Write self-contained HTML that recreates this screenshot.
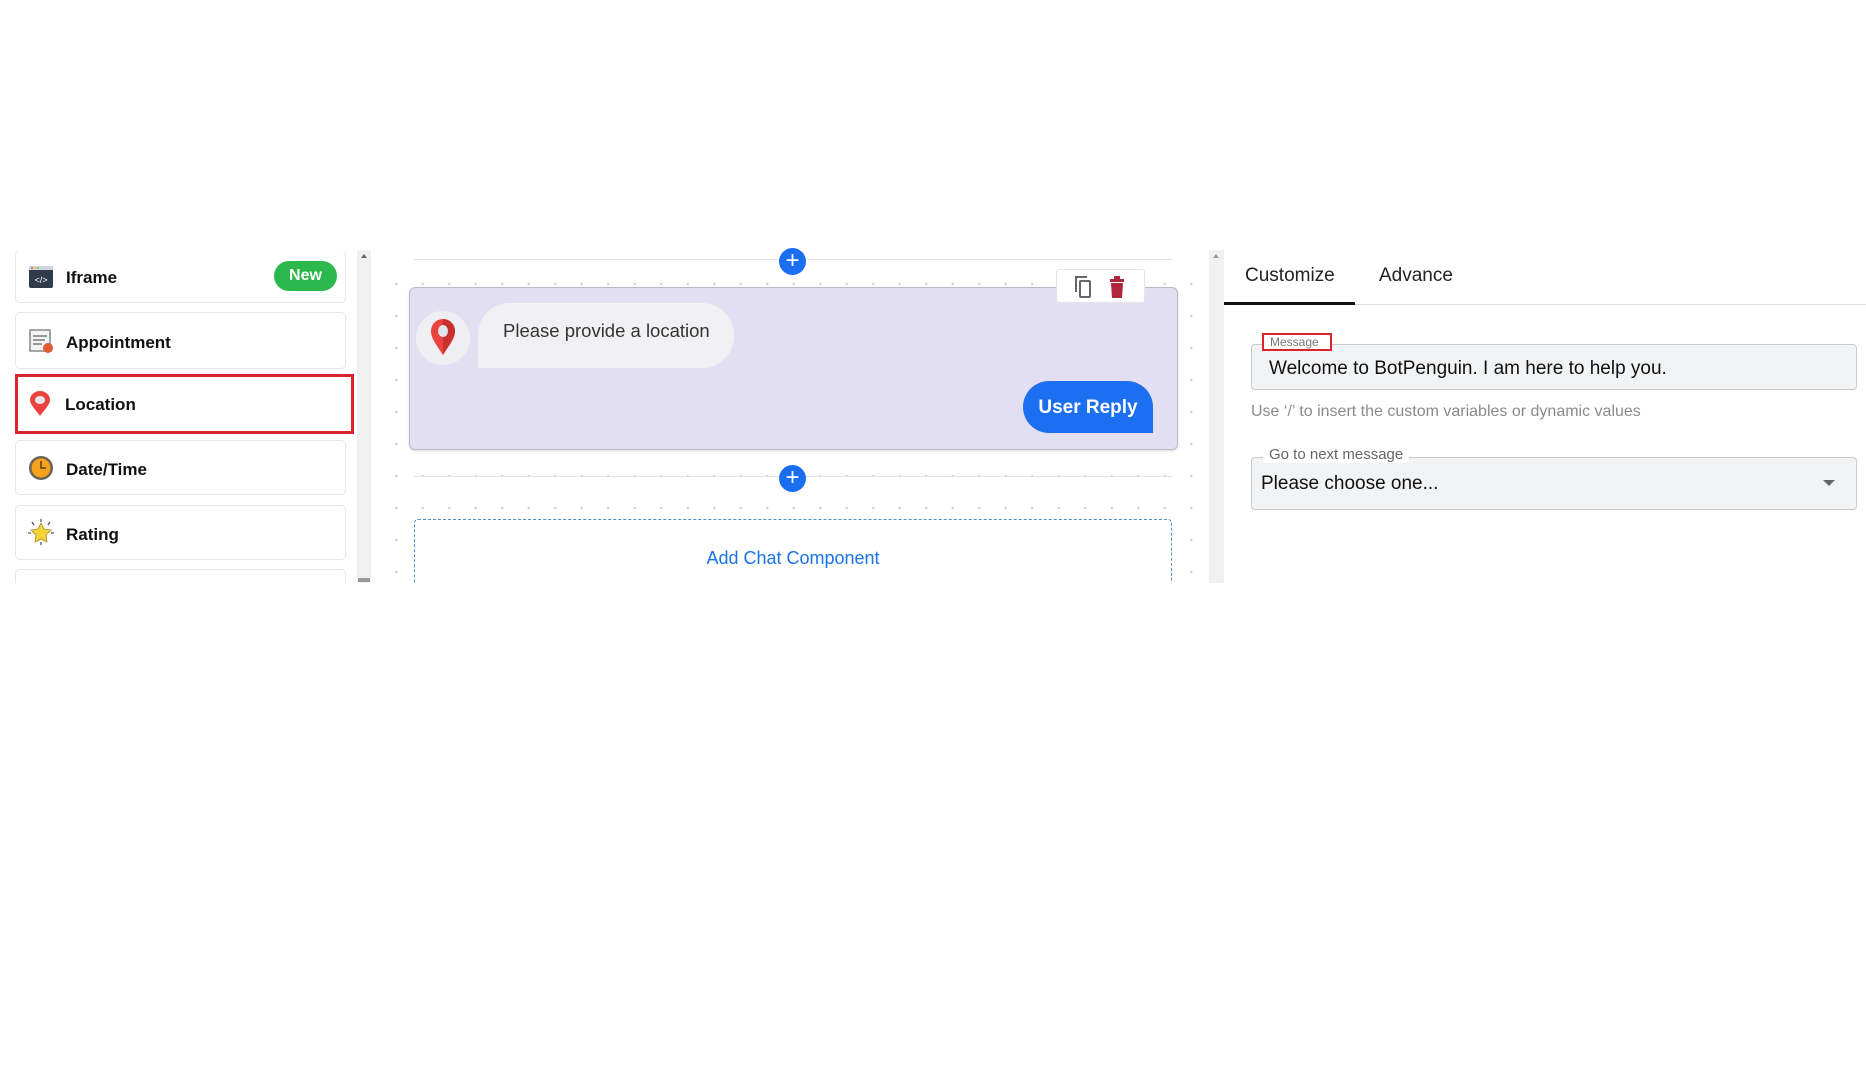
<!DOCTYPE html>
<html><head><meta charset="utf-8"><style>
*{box-sizing:border-box;margin:0;padding:0}
body{width:1866px;height:1080px;background:#fff;position:relative;overflow:hidden;font-family:"Liberation Sans",sans-serif;color:#222}
.a{position:absolute}
.card{position:absolute;left:15px;width:331px;background:#fff;border:1px solid #e6e6e6;border-radius:5px}
.lbl{position:absolute;left:50px;font-size:17px;font-weight:bold;color:#111}
.ic{position:absolute;left:12px;width:26px;height:26px}
.dots{background-image:radial-gradient(circle,#cfcfcf 1px,transparent 1.4px);background-size:26.5px 32px;background-position:3px 0px}
.plus{position:absolute;width:27px;height:27px;border-radius:50%;background:#1a6ef0;color:#fff;font-size:24px;line-height:26px;text-align:center}
</style></head><body>
<div class="card" style="top:250px;height:53px;border-top:none">
 <svg class="ic" style="top:14px" viewBox="0 0 26 26"><rect x="1" y="2" width="24" height="22" rx="2" fill="#2f3a4a"/><rect x="1" y="2" width="24" height="4" fill="#cfd6de"/><circle cx="4" cy="4" r="1" fill="#e55"/><circle cx="7" cy="4" r="1" fill="#fb3"/><circle cx="10" cy="4" r="1" fill="#5c5"/><text x="13" y="19" font-size="9" fill="#fff" text-anchor="middle" font-family="Liberation Sans">&lt;/&gt;</text></svg>
 <div class="lbl" style="top:18px">Iframe</div>
 <div class="a" style="left:258px;top:11px;width:63px;height:30px;border-radius:15px;background:#2db84d;color:#fff;font-weight:bold;font-size:16px;text-align:center;line-height:30px">New</div>
</div>
<div class="card" style="top:312px;height:57px">
 <svg class="ic" style="top:15px" viewBox="0 0 26 26"><rect x="2" y="2" width="20" height="21" fill="#f3f3f3" stroke="#777" stroke-width="1.3"/><path d="M5 8h14M5 12h12M5 16h9" stroke="#777" stroke-width="1.5"/><circle cx="20" cy="20" r="5" fill="#e05a3a"/></svg>
 <div class="lbl" style="top:20px">Appointment</div>
</div>
<div class="card" style="top:374px;height:60px;left:15px;width:339px;border:3px solid #d9242c;border-radius:0">
 <svg class="ic" style="top:14px;left:9px" viewBox="0 0 26 26"><path d="M13 25C7 17 3 13 3 9a10 9 0 0 1 20 0c0 4-4 8-10 16z" fill="#e9423f"/><ellipse cx="13" cy="9" rx="5" ry="4" fill="#e6e6ea"/></svg>
 <div class="lbl" style="top:18px;left:47px">Location</div>
</div>
<div class="card" style="top:440px;height:55px">
 <svg class="ic" style="top:14px" viewBox="0 0 26 26"><circle cx="13" cy="13" r="12" fill="#6b6355"/><circle cx="13" cy="13" r="9.5" fill="#f7a21b"/><path d="M13 6v7h5" stroke="#5a3a10" stroke-width="1.5" fill="none"/></svg>
 <div class="lbl" style="top:19px">Date/Time</div>
</div>
<div class="card" style="top:505px;height:55px">
 <svg class="ic" style="top:13px" viewBox="0 0 26 26"><path d="M13 4l3 6 7 1-5 5 1 7-6-3-6 3 1-7-5-5 7-1z" fill="#f5d33a" stroke="#a98a20" stroke-width=".8"/><path d="M13 0v3M4 3l2 3M22 3l-2 3M0 14h3M23 14h3M13 23v3" stroke="#555" stroke-width="1.3"/></svg>
 <div class="lbl" style="top:19px">Rating</div>
</div>
<div class="card" style="top:569px;height:30px"></div>
<div class="a" style="left:357px;top:250px;width:14px;height:333px;background:#f1f1f1"></div>
<div class="a" style="left:361px;top:251px;width:0;height:0;border:3px solid transparent;border-bottom:4px solid #666"></div>
<div class="a" style="left:358px;top:578px;width:12px;height:4px;background:#999"></div>
<div class="a dots" style="left:380px;top:268px;width:820px;height:315px"></div>
<div class="a" style="left:414px;top:259px;width:758px;height:1px;background:#e2e2e2"></div>
<div class="plus" style="left:779px;top:248px">+</div>
<div class="a" style="left:409px;top:287px;width:769px;height:163px;background:#e3dff2;border:1px solid #bdbac8;border-radius:6px;box-shadow:0 1px 2px rgba(0,0,0,.15)"></div>
<div class="a" style="left:1056px;top:269px;width:89px;height:34px;background:#fff;border:1px solid #e5e5e5;border-radius:3px"></div>
<svg class="a" style="left:1073px;top:275px" width="22" height="24" viewBox="0 0 22 24"><path d="M3 17V2h11" stroke="#666" stroke-width="2" fill="none"/><rect x="7" y="6" width="10" height="16" rx="1" stroke="#666" stroke-width="2" fill="none"/></svg>
<svg class="a" style="left:1109px;top:276px" width="16" height="22" viewBox="0 0 16 22"><rect x="1" y="3" width="14" height="3" fill="#b0253a"/><rect x="5" y="0" width="6" height="3" fill="#b0253a"/><path d="M2 7h12l-1 15H3z" fill="#b0253a"/></svg>
<div class="a" style="left:416px;top:311px;width:54px;height:54px;border-radius:50%;background:#eeeef3"></div>
<svg class="a" style="left:429px;top:318px" width="28" height="38" viewBox="0 0 28 38"><path d="M14 37C6 25 2 20 2 13a12 12 0 0 1 24 0c0 7-4 12-12 24z" fill="#e9423f"/><path d="M14 37C20 25 26 20 26 13A12 12 0 0 0 14 1z" fill="#c8302d"/><ellipse cx="14" cy="13" rx="5" ry="6" fill="#dfe4ea"/></svg>
<div class="a" style="left:478px;top:303px;width:256px;height:65px;background:#f1f1f3;border-radius:32px 32px 32px 0;font-size:18.5px;color:#333;line-height:56px;padding-left:25px">Please provide a location</div>
<div class="a" style="left:1023px;top:381px;width:130px;height:52px;background:#1d6ff2;border-radius:26px 26px 0 26px;color:#fff;font-size:19px;font-weight:bold;text-align:center;line-height:54px">User Reply</div>
<div class="a" style="left:414px;top:476px;width:758px;height:1px;background:#e2e2e2"></div>
<div class="plus" style="left:779px;top:465px">+</div>
<div class="a" style="left:414px;top:519px;width:758px;height:70px;background:#fff;border:1px dashed #4d8ecb;border-bottom:none;border-radius:4px 4px 0 0"></div>
<div class="a" style="left:414px;top:548px;width:758px;text-align:center;font-size:18px;color:#1a73e8">Add Chat Component</div>
<div class="a" style="left:0;top:583px;width:1866px;height:497px;background:#fff"></div>
<div class="a" style="left:1209px;top:250px;width:15px;height:333px;background:#f1f1f1"></div>
<div class="a" style="left:1213px;top:251px;width:0;height:0;border:3px solid transparent;border-bottom:4px solid #999"></div>
<div class="a" style="left:1245px;top:265px;font-size:19px;color:#222">Customize</div>
<div class="a" style="left:1379px;top:265px;font-size:19px;color:#222">Advance</div>
<div class="a" style="left:1224px;top:304px;width:642px;height:1px;background:#ddd"></div>
<div class="a" style="left:1224px;top:302px;width:131px;height:3px;background:#111"></div>
<div class="a" style="left:1251px;top:344px;width:606px;height:46px;background:#f2f3f4;border:1px solid #c9c9c9;border-radius:4px"></div>
<div class="a" style="left:1262px;top:333px;width:70px;height:18px;background:#fff;border:2px solid #d9242c;font-size:12px;color:#777;line-height:14px;padding-left:6px">Message</div>
<div class="a" style="left:1269px;top:358px;font-size:19px;color:#111">Welcome to BotPenguin. I am here to help you.</div>
<div class="a" style="left:1251px;top:403px;font-size:16px;color:#8a8a8a">Use ‘/’ to insert the custom variables or dynamic values</div>
<div class="a" style="left:1251px;top:457px;width:606px;height:53px;background:#f2f3f4;border:1px solid #c9c9c9;border-radius:4px"></div>
<div class="a" style="left:1263px;top:446px;padding:0 6px;background:#fff;font-size:15px;color:#666">Go to next message</div>
<div class="a" style="left:1261px;top:473px;font-size:19px;color:#111">Please choose one...</div>
<div class="a" style="left:1823px;top:480px;width:0;height:0;border:6px solid transparent;border-top:6px solid #666"></div>
</body></html>
